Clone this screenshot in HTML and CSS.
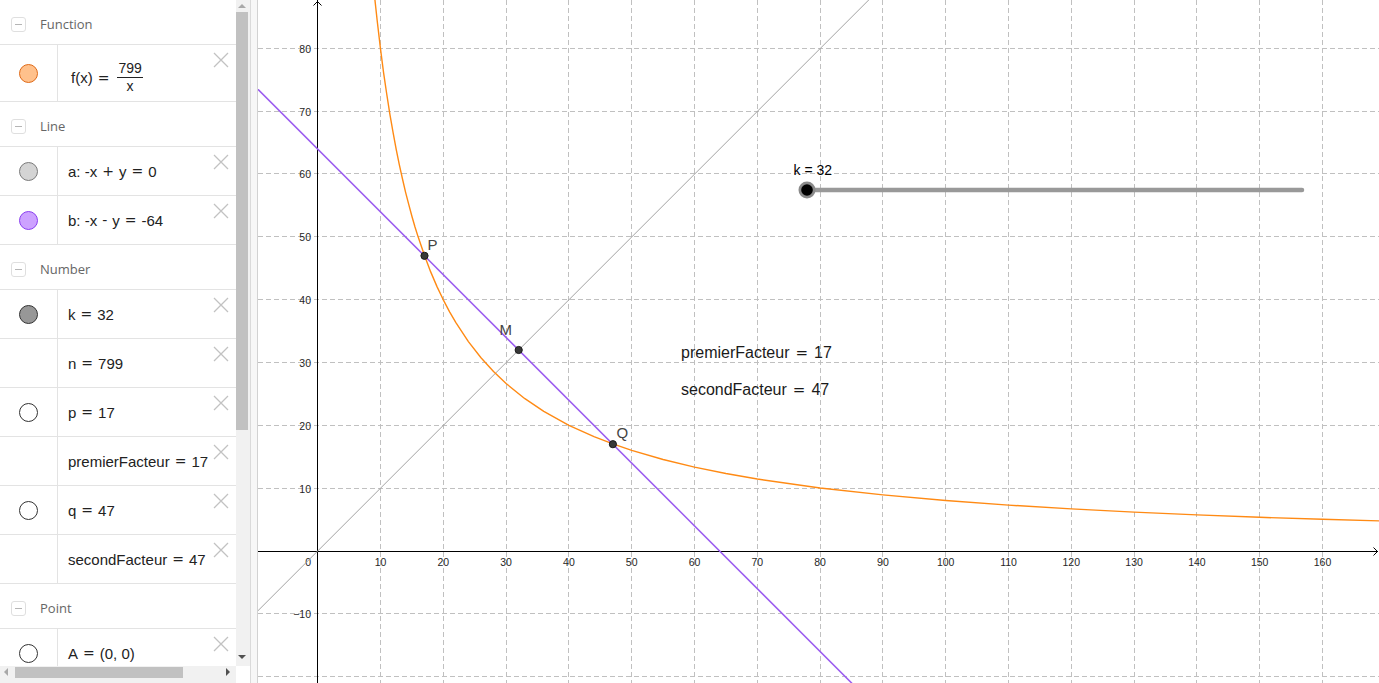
FILE: index.html
```html
<!DOCTYPE html>
<html>
<head>
<meta charset="utf-8">
<title>GeoGebra</title>
<link rel="stylesheet" href="styles.css">
</head>
<body>
<div class="app">
  <aside class="algebra">
    <div class="list">
      <div class="group-head"><span class="collapse"></span><span class="group-title">Function</span></div>
      <div class="item item-tall">
        <div class="marker"><span class="dot dot-orange"></span></div>
        <div class="content content-f">
          <span class="expr">f(x)<span class="eq">=</span><span class="frac"><span class="num">799</span><span class="den">x</span></span></span>
          <svg class="del del-f" viewBox="0 0 16 16"><path d="M1 1L15 15M15 1L1 15"/></svg>
        </div>
      </div>

      <div class="group-head"><span class="collapse"></span><span class="group-title">Line</span></div>
      <div class="item">
        <div class="marker"><span class="dot dot-gray"></span></div>
        <div class="content">
          <span class="expr">a: -x<span class="op">+</span>y<span class="eq">=</span>0</span>
          <svg class="del" viewBox="0 0 16 16"><path d="M1 1L15 15M15 1L1 15"/></svg>
        </div>
      </div>
      <div class="item">
        <div class="marker"><span class="dot dot-purple"></span></div>
        <div class="content">
          <span class="expr">b: -x<span class="op">-</span>y<span class="eq">=</span>-64</span>
          <svg class="del" viewBox="0 0 16 16"><path d="M1 1L15 15M15 1L1 15"/></svg>
        </div>
      </div>

      <div class="group-head"><span class="collapse"></span><span class="group-title">Number</span></div>
      <div class="item">
        <div class="marker"><span class="dot dot-dark"></span></div>
        <div class="content">
          <span class="expr">k<span class="eq">=</span>32</span>
          <svg class="del" viewBox="0 0 16 16"><path d="M1 1L15 15M15 1L1 15"/></svg>
        </div>
      </div>
      <div class="item">
        <div class="marker"></div>
        <div class="content">
          <span class="expr">n<span class="eq">=</span>799</span>
          <svg class="del" viewBox="0 0 16 16"><path d="M1 1L15 15M15 1L1 15"/></svg>
        </div>
      </div>
      <div class="item">
        <div class="marker"><span class="dot dot-white"></span></div>
        <div class="content">
          <span class="expr">p<span class="eq">=</span>17</span>
          <svg class="del" viewBox="0 0 16 16"><path d="M1 1L15 15M15 1L1 15"/></svg>
        </div>
      </div>
      <div class="item">
        <div class="marker"></div>
        <div class="content">
          <span class="expr">premierFacteur<span class="eq">=</span>17</span>
          <svg class="del" viewBox="0 0 16 16"><path d="M1 1L15 15M15 1L1 15"/></svg>
        </div>
      </div>
      <div class="item">
        <div class="marker"><span class="dot dot-white"></span></div>
        <div class="content">
          <span class="expr">q<span class="eq">=</span>47</span>
          <svg class="del" viewBox="0 0 16 16"><path d="M1 1L15 15M15 1L1 15"/></svg>
        </div>
      </div>
      <div class="item">
        <div class="marker"></div>
        <div class="content">
          <span class="expr">secondFacteur<span class="eq">=</span>47</span>
          <svg class="del" viewBox="0 0 16 16"><path d="M1 1L15 15M15 1L1 15"/></svg>
        </div>
      </div>

      <div class="group-head"><span class="collapse"></span><span class="group-title">Point</span></div>
      <div class="item">
        <div class="marker"><span class="dot dot-white"></span></div>
        <div class="content">
          <span class="expr">A<span class="eq">=</span>(0, 0)</span>
          <svg class="del" viewBox="0 0 16 16"><path d="M1 1L15 15M15 1L1 15"/></svg>
        </div>
      </div>
    </div>

    <div class="vscroll">
      <span class="arrow-up"></span>
      <span class="vthumb"></span>
      <span class="arrow-down"></span>
    </div>
    <div class="hscroll">
      <span class="arrow-left"></span>
      <span class="hthumb"></span>
      <span class="arrow-right"></span>
    </div>
    <div class="corner"></div>
  </aside>

  <div class="splitter"></div>

  <main class="graphics">
    <svg class="canvas" width="1121" height="683" viewBox="0 0 1121 683">
      <path class="grid" d="M122.5 0V683M185.5 0V683M248.5 0V683M310.5 0V683M373.5 0V683M436.5 0V683M499.5 0V683M562.5 0V683M624.5 0V683M687.5 0V683M750.5 0V683M813.5 0V683M876.5 0V683M938.5 0V683M1001.5 0V683M1064.5 0V683"/>
      <path class="grid" d="M0 48.5H1121M0 111.5H1121M0 173.5H1121M0 236.5H1121M0 299.5H1121M0 362.5H1121M0 425.5H1121M0 488.5H1121M0 613.5H1121M0 676.5H1121"/>

      <path class="axis" d="M59.5 0V683M0 551.5H1120"/>
      <path class="axis" d="M55.5 5.5L59.5 1.5L63.5 5.5M1115.5 547.5L1119.5 551.5L1115.5 555.5"/>

      <g class="ticks-x">
        <text x="122.5" y="566">10</text>
        <text x="185.3" y="566">20</text>
        <text x="248.1" y="566">30</text>
        <text x="310.9" y="566">40</text>
        <text x="373.7" y="566">50</text>
        <text x="436.5" y="566">60</text>
        <text x="499.3" y="566">70</text>
        <text x="562.1" y="566">80</text>
        <text x="624.9" y="566">90</text>
        <text x="687.7" y="566">100</text>
        <text x="750.5" y="566">110</text>
        <text x="813.3" y="566">120</text>
        <text x="876.1" y="566">130</text>
        <text x="938.9" y="566">140</text>
        <text x="1001.7" y="566">150</text>
        <text x="1064.5" y="566">160</text>
      </g>
      <g class="ticks-y">
        <text x="53" y="566">0</text>
        <text x="53" y="52.5">80</text>
        <text x="53" y="115.5">70</text>
        <text x="53" y="177.5">60</text>
        <text x="53" y="240.5">50</text>
        <text x="53" y="303.5">40</text>
        <text x="53" y="366.5">30</text>
        <text x="53" y="429.5">20</text>
        <text x="53" y="492.5">10</text>
        <text x="53" y="617.5">−10</text>
      </g>

      <path class="line-a" d="M-15.7 626.4L624.9 -14.2"/>
      <path class="line-b" d="M-15.7 73.7L750.5 839.9"/>
      <polyline class="curve-f" points="116.2,-6.8 119.4,22.5 122.5,48.9 125.6,72.8 128.8,94.5 131.9,114.4 135.1,132.6 138.2,149.3 141.3,164.7 144.5,179.0 147.6,192.3 150.8,204.7 153.9,216.2 157.0,227.0 160.2,237.1 166.5,255.5 172.7,271.9 179.0,286.6 185.3,299.8 191.6,311.8 197.9,322.6 210.4,341.6 223.0,357.7 235.5,371.5 248.1,383.5 266.9,398.7 285.8,411.3 310.9,425.3 336.0,436.7 354.9,443.9 373.7,450.3 405.1,459.5 436.5,467.1 467.9,473.5 499.3,479.0 562.1,488.0 624.9,494.9 687.7,500.5 750.5,505.1 813.3,508.9 876.1,512.1 938.9,514.9 1001.7,517.3 1064.5,519.3 1190.1,522.8"/>

      <circle class="pt" cx="166.5" cy="255.8" r="3.6"/>
      <circle class="pt" cx="260.7" cy="350" r="3.6"/>
      <circle class="pt" cx="354.9" cy="444.2" r="3.6"/>
      <text class="ptlabel" x="169.5" y="250">P</text>
      <text class="ptlabel" x="241.5" y="334.5">M</text>
      <text class="ptlabel" x="358.5" y="438">Q</text>

      <text class="slider-label" x="535.5" y="175">k = 32</text>
      <line class="slider-track" x1="549" y1="190" x2="1044" y2="190"/>
      <circle class="slider-ring" cx="549" cy="190" r="8.5"/>
      <circle class="slider-knob" cx="549" cy="190" r="5.8"/>

      <text class="gtext" x="423" y="358">premierFacteur<tspan class="geq" dx="6">=</tspan><tspan dx="6">17</tspan></text>
      <text class="gtext" x="423" y="395">secondFacteur<tspan class="geq" dx="6">=</tspan><tspan dx="6">47</tspan></text>
    </svg>
  </main>
</div>
</body>
</html>
```
FILE: styles.css
```css
* { box-sizing: border-box; }
html, body { margin: 0; padding: 0; }
body {
  width: 1379px;
  height: 683px;
  overflow: hidden;
  background: #ffffff;
  font-family: "Liberation Sans", Arial, sans-serif;
}
.app { display: flex; height: 683px; }

/* ---------- algebra view ---------- */
.algebra {
  width: 251px;
  flex: none;
  display: grid;
  grid-template-columns: 236px 14px;
  grid-template-rows: 666px 17px;
  border-right: 1px solid #dadada;
  background: #ffffff;
}
.list { overflow: hidden; }

.group-head {
  height: 45px;
  display: flex;
  align-items: center;
  padding: 4px 0 0 11px;
  border-bottom: 1px solid #e3e3e3;
}
.collapse {
  width: 15px;
  height: 15px;
  border: 1px solid #dfdfdf;
  border-radius: 3px;
  display: flex;
  align-items: center;
  justify-content: center;
  flex: none;
}
.collapse::before {
  content: "";
  width: 7px;
  height: 1px;
  background: #b5b5b5;
}
.group-title {
  margin-left: 14px;
  font-family: "Open Sans", "Noto Sans", sans-serif;
  font-size: 13px;
  color: #666666;
}

.item {
  height: 49px;
  display: flex;
  border-bottom: 1px solid #e3e3e3;
}
.item-tall { height: 57px; }
.marker {
  width: 58px;
  flex: none;
  border-right: 1px solid #e3e3e3;
  display: flex;
  align-items: center;
  justify-content: center;
}
.dot {
  width: 19px;
  height: 19px;
  border-radius: 50%;
  border: 1px solid #333333;
  background: #ffffff;
}
.dot-orange { background: #ffc18c; border-color: #df6a17; }
.dot-gray { background: #d4d4d4; border-color: #7a7a7a; }
.dot-purple { background: #cda2ff; border-color: #8a3ff0; }
.dot-dark { background: #979797; border-color: #333333; }
.dot-white { background: #ffffff; border-color: #333333; }

.content {
  flex: 1;
  display: flex;
  align-items: center;
  padding: 0 7px 0 10px;
  font-size: 15px;
  color: #222222;
  white-space: nowrap;
}
.content-f { padding-left: 13px; padding-top: 9px; }
.expr { display: flex; align-items: center; }
.eq, .op {
  font-family: "DejaVu Sans", sans-serif;
  font-size: 14px;
  margin: 0 5px;
}
.frac {
  display: inline-flex;
  flex-direction: column;
  align-items: center;
  margin-left: 3px;
  font-size: 14px;
  line-height: 15px;
}
.num { padding: 0 1px 1px; border-bottom: 1px solid #222222; }
.den { padding-top: 1px; }

.del {
  width: 16px;
  height: 16px;
  flex: none;
  align-self: flex-start;
  margin-top: 7px;
  margin-left: auto;
}
.del-f { margin-top: -2px; }
.del path { stroke: #c2c2c2; stroke-width: 1.3; fill: none; }

/* scrollbars */
.vscroll {
  background: #f1f1f1;
  display: flex;
  flex-direction: column;
  align-items: flex-start;
}
.arrow-up {
  margin: 4px 0 0 2px;
  width: 0; height: 0;
  border-left: 4px solid transparent;
  border-right: 4px solid transparent;
  border-bottom: 4px solid #a8a8a8;
}
.vthumb {
  margin-top: 4px;
  width: 12px;
  height: 418px;
  background: #c1c1c1;
}
.arrow-down {
  margin: auto 0 7px 2px;
  width: 0; height: 0;
  border-left: 4px solid transparent;
  border-right: 4px solid transparent;
  border-top: 4px solid #505050;
}
.hscroll {
  background: #f1f1f1;
  display: flex;
  align-items: center;
  padding-bottom: 5px;
}
.arrow-left {
  margin-left: 4px;
  width: 0; height: 0;
  border-top: 4px solid transparent;
  border-bottom: 4px solid transparent;
  border-right: 4px solid #a8a8a8;
}
.hthumb {
  margin-left: 7px;
  width: 168px;
  height: 11px;
  background: #c1c1c1;
}
.arrow-right {
  margin-left: auto;
  margin-right: 6px;
  width: 0; height: 0;
  border-top: 4px solid transparent;
  border-bottom: 4px solid transparent;
  border-left: 4px solid #505050;
}
.corner { background: #ffffff; }

.splitter {
  width: 7px;
  flex: none;
  background: #f7f7f7;
  border-right: 1px solid #d2d2d2;
}

/* ---------- graphics view ---------- */
.graphics { flex: 1; overflow: hidden; background: #ffffff; }
.canvas { display: block; }
.grid { stroke: #c0c0c0; stroke-width: 1; stroke-dasharray: 5 3; fill: none; }
.axis { stroke: #000000; stroke-width: 1; fill: none; }
.ticks-x text, .ticks-y text {
  font-family: "Liberation Sans", Arial, sans-serif;
  font-size: 10.5px;
  fill: #262626;
}
.ticks-x text { text-anchor: middle; }
.ticks-y text { text-anchor: end; }

.line-a { stroke: #a3a3a3; stroke-width: 1; fill: none; }
.line-b { stroke: #9b5cf0; stroke-width: 1.5; fill: none; }
.curve-f { stroke: #ff8a14; stroke-width: 1.4; fill: none; stroke-linejoin: round; }

.pt { fill: #383838; stroke: #1a1a1a; stroke-width: 1; }
.ptlabel {
  font-family: "Liberation Sans", Arial, sans-serif;
  font-size: 15px;
  fill: #444444;
}

.slider-label {
  font-family: "Liberation Sans", Arial, sans-serif;
  font-size: 14px;
  fill: #000000;
}
.slider-track { stroke: #999999; stroke-width: 4.5; stroke-linecap: round; }
.slider-ring { fill: #8a8a8a; }
.slider-knob { fill: #000000; }

.gtext {
  font-family: "Liberation Sans", Arial, sans-serif;
  font-size: 16px;
  fill: #1a1a1a;
}
.geq { font-family: "DejaVu Sans", sans-serif; font-size: 15px; }
```
